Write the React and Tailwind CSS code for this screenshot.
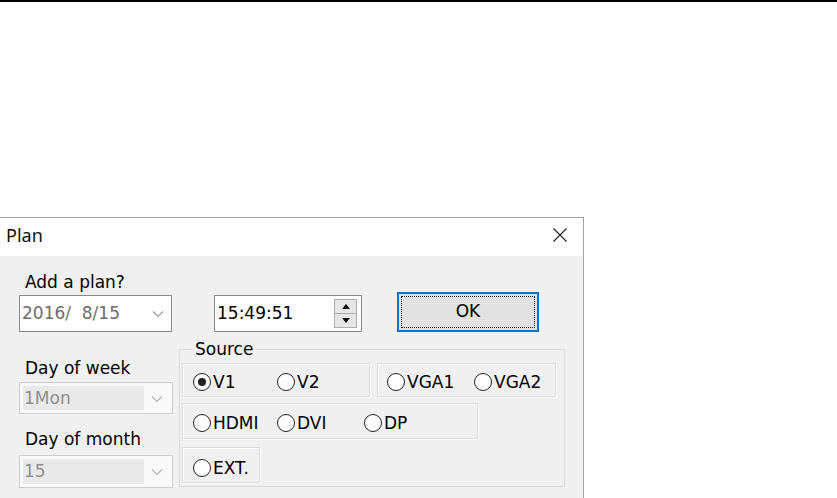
import React from 'react'

const font = { fontFamily: '"DejaVu Sans", Verdana, sans-serif' }

function Chevron({ color = '#9a9a9a' }) {
  return (
    <svg width="12" height="8" viewBox="0 0 12 8" className="shrink-0">
      <polyline points="1,1.5 6,6.5 11,1.5" fill="none" stroke={color} strokeWidth="1.2" />
    </svg>
  )
}

function DisabledCombo({ value, h }) {
  return (
    <div className={`flex w-[154px] ${h} border border-[#cccccc] bg-[#f9f9f9] p-[3px]`}>
      <div className="flex w-[121px] items-center bg-[#e9e9e9] pl-[1px] text-[17px] leading-none text-[#8f8f8f]">
        {value}
      </div>
      <div className="flex flex-1 items-center justify-center pt-[1px]">
        <Chevron color="#b4b4b4" />
      </div>
    </div>
  )
}

function Radio({ label, checked, w }) {
  return (
    <div className={`flex items-center ${w}`}>
      <span className="flex h-[18px] w-[18px] shrink-0 items-center justify-center rounded-full border border-[#222222] bg-white">
        {checked && <span className="h-[8px] w-[8px] rounded-full bg-[#222222]" />}
      </span>
      <span className="ml-[2px] text-[17px] leading-[20px] text-black">{label}</span>
    </div>
  )
}

function Group({ className, children }) {
  return (
    <div className={`flex items-center border border-[#dadada] pt-[3px] shadow-[inset_1px_1px_0_#ffffff,1px_1px_0_#ffffff] ${className}`}>
      {children}
    </div>
  )
}

export default function App() {
  return (
    <div className="h-[498px] overflow-hidden bg-white" style={font}>
      <div className="h-[2px] bg-black" />
      <div className="mt-[215px] w-[584px] border-r border-t border-[#a3a3a3]">
        <div className="flex h-[38px] items-center justify-between bg-white pl-[6px] pr-[15px]">
          <span className="-mt-[4px] text-[18px] leading-[24px] text-[#111111]" style={{ fontFamily: '"Noto Sans", sans-serif' }}>
            Plan
          </span>
          <svg width="16" height="16" viewBox="0 0 16 16" className="-mt-[4px]">
            <path d="M1.5 1.5 L14.5 14.5 M14.5 1.5 L1.5 14.5" stroke="#222222" strokeWidth="1.2" />
          </svg>
        </div>

        <div className="h-[260px] bg-[#f0f0f0] pl-[19px] pt-[16px]">
          <div className="ml-[6px] text-[17px] leading-[20px] text-black">Add a plan?</div>

          <div className="flex h-[40px] items-end">
            <div className="flex h-[37px] w-[153px] items-center justify-between border border-[#8a8a8a] bg-white pl-[2px] pr-[7px]">
              <span className="whitespace-pre text-[17px] text-[#6d6d6d]">2016/  8/15</span>
              <Chevron />
            </div>
            <div className="ml-[42px] flex h-[37px] w-[148px] items-center justify-between border border-[#8a8a8a] bg-white pl-[2px] pr-[4px]">
              <span className="text-[17px] text-black">15:49:51</span>
              <div className="flex h-[29px] w-[23px] flex-col border border-[#acacac]">
                <div className="flex flex-1 items-center justify-center border-b border-[#acacac] bg-[#e6e6e6]">
                  <svg width="8" height="5" viewBox="0 0 8 5"><polygon points="4,0 8,5 0,5" fill="#111" /></svg>
                </div>
                <div className="flex flex-1 items-center justify-center bg-[#e6e6e6]">
                  <svg width="8" height="5" viewBox="0 0 8 5"><polygon points="0,0 8,0 4,5" fill="#111" /></svg>
                </div>
              </div>
            </div>
            <button className="ml-[35px] flex h-[40px] w-[142px] items-center justify-center border-2 border-[#0078d7] bg-[#e1e1e1] p-[2px]">
              <span className="flex h-full w-full items-center justify-center border border-dotted border-[#222222] text-[17px] text-black">
                OK
              </span>
            </button>
          </div>

          <div className="flex items-start">
            <div className="w-[153px]">
              <div className="ml-[6px] mt-[26px] text-[17px] leading-[20px] text-black">Day of week</div>
              <div className="mt-[4px]">
                <DisabledCombo value="1Mon" h="h-[32px]" />
              </div>
              <div className="ml-[6px] mt-[15px] text-[17px] leading-[20px] text-black">Day of month</div>
              <div className="mt-[6px]">
                <DisabledCombo value="15" h="h-[33px]" />
              </div>
            </div>

            <fieldset className="ml-[7px] mt-[9px] w-[386px] border border-[#dadada] pb-[3px] pl-[2px]">
              <legend className="ml-[10px] px-[3px] text-[17px] leading-[16px] text-black">Source</legend>
              <div className="mt-[6px] flex">
                <Group className="h-[34px] w-[188px] pl-[10px]">
                  <Radio label="V1" checked w="w-[84px]" />
                  <Radio label="V2" />
                </Group>
                <Group className="ml-[7px] h-[34px] w-[179px] pl-[9px]">
                  <Radio label="VGA1" w="w-[87px]" />
                  <Radio label="VGA2" />
                </Group>
              </div>
              <Group className="mt-[6px] h-[36px] w-[296px] pl-[10px]">
                <Radio label="HDMI" w="w-[84px]" />
                <Radio label="DVI" w="w-[87px]" />
                <Radio label="DP" />
              </Group>
              <Group className="mt-[8px] h-[36px] w-[78px] pl-[10px] pt-[6px]">
                <Radio label="EXT." />
              </Group>
            </fieldset>
          </div>
        </div>
      </div>
    </div>
  )
}
